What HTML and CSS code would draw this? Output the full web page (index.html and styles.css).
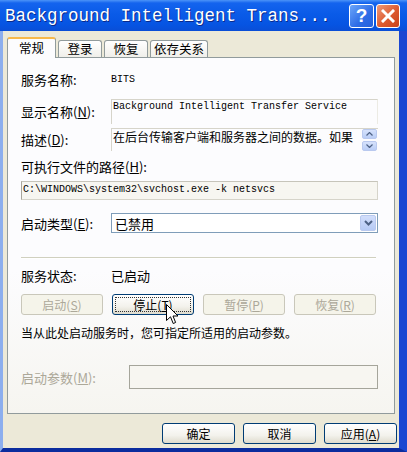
FILE: index.html
```html
<!DOCTYPE html>
<html lang="zh-CN">
<head>
    <meta charset="UTF-8">
    <meta name="viewport" content="width=device-width, initial-scale=1.0">
    <title>BITS 属性</title>
    <link rel="stylesheet" href="styles.css">
</head>
<body>
    <div class="window">
        <div class="titlebar">
            <span class="title">Background Intelligent Trans...</span>
            <span class="cap-btn help">?</span>
            <span class="cap-btn close">
                <svg width="14" height="14" viewBox="0 0 14 14"><path d="M2 2 L12 12 M12 2 L2 12" stroke="#fff" stroke-width="3" stroke-linecap="square"/></svg>
            </span>
        </div>
        <div class="client">
            <div class="tabs">
                <div class="tab active">常规</div>
                <div class="tab">登录</div>
                <div class="tab">恢复</div>
                <div class="tab wide">依存关系</div>
            </div>
            <div class="panel">
                <div class="row r-name">
                    <span class="label">服务名称:</span>
                    <span class="mono">BITS</span>
                </div>
                <div class="row r-display">
                    <span class="label">显示名称(<u>N</u>):</span>
                    <div class="textbox mono">Background Intelligent Transfer Service</div>
                </div>
                <div class="row r-desc">
                    <span class="label">描述(<u>D</u>):</span>
                    <div class="textbox desc">
                        <span>在后台传输客户端和服务器之间的数据。如果</span>
                        <div class="spin">
                            <span class="spin-btn"><svg width="7" height="4" viewBox="0 0 7 4"><path d="M0.5 3.5 L3.5 0.5 L6.5 3.5" fill="none" stroke="#4D6185" stroke-width="1.2"/></svg></span>
                            <span class="spin-btn"><svg width="7" height="4" viewBox="0 0 7 4"><path d="M0.5 0.5 L3.5 3.5 L6.5 0.5" fill="none" stroke="#4D6185" stroke-width="1.2"/></svg></span>
                        </div>
                    </div>
                </div>
                <div class="row r-path-label">
                    <span>可执行文件的路径(<u>H</u>):</span>
                </div>
                <div class="pathbox mono">C:\WINDOWS\system32\svchost.exe -k netsvcs</div>
                <div class="row r-type">
                    <span class="label">启动类型(<u>E</u>):</span>
                    <div class="combo">
                        <span>已禁用</span>
                        <span class="combo-btn"><svg width="9" height="6" viewBox="0 0 9 6"><path d="M1 1 L4.5 4.5 L8 1" fill="none" stroke="#4D6185" stroke-width="2"/></svg></span>
                    </div>
                </div>
                <div class="sep"></div>
                <div class="row r-status">
                    <span class="label">服务状态:</span>
                    <span>已启动</span>
                </div>
                <div class="btnrow">
                    <span class="btn disabled">启动(<u>S</u>)</span>
                    <span class="btn focused"><span class="focus">停止(<u>T</u>)</span></span>
                    <span class="btn disabled">暂停(<u>P</u>)</span>
                    <span class="btn disabled">恢复(<u>R</u>)</span>
                </div>
                <div class="note">当从此处启动服务时，您可指定所适用的启动参数。</div>
                <div class="row r-param">
                    <span class="label wide-label">启动参数(<u>M</u>):</span>
                    <div class="param-box"></div>
                </div>
            </div>
            <div class="footer">
                <span class="btn">确定</span>
                <span class="btn">取消</span>
                <span class="btn">应用(<u>A</u>)</span>
            </div>
        </div>
        <svg class="cursor" width="13" height="21" viewBox="0 0 13 21">
            <path d="M0.5 0.5 L0.5 16.5 L4.5 12.8 L7.2 19.5 L9.6 18.5 L7 12 L12 12 Z" fill="#fff" stroke="#000" stroke-width="1" stroke-linejoin="miter"/>
        </svg>
    </div>
</body>
</html>
```

FILE: styles.css
```css
* {
    box-sizing: border-box;
}
body {
    margin: 0;
    font-family: "Noto Sans CJK SC", sans-serif;
    font-size: 13px;
    color: #000;
}
u {
    text-decoration: underline;
}
.window {
    position: relative;
    width: 407px;
    height: 452px;
    display: flex;
    flex-direction: column;
    background: #0A3FC8;
}
.titlebar {
    height: 31px;
    flex: none;
    display: flex;
    align-items: center;
    padding-left: 5px;
    background: linear-gradient(#4C94F8 0, #1464EE 3px, #0A5BE8 45%, #0654E2 80%, #0A4ED6 100%);
}
.title {
    flex: 1;
    color: #fff;
    font-family: "Liberation Mono", monospace;
    font-size: 17.5px;
    line-height: 20px;
    white-space: nowrap;
    text-shadow: 1px 1px 0 #0B2A8A;
}
.cap-btn {
    width: 25px;
    height: 24px;
    border: 1px solid #fff;
    border-radius: 3px;
    display: flex;
    align-items: center;
    justify-content: center;
}
.help {
    margin-right: 2px;
    background: linear-gradient(135deg, #6BA6FA, #2E6CE6 60%, #2660DC);
    color: #fff;
    font-family: "Liberation Sans", sans-serif;
    font-weight: bold;
    font-size: 19px;
}
.close {
    width: 24px;
    margin-right: 7px;
    background: linear-gradient(135deg, #F09A78, #DC5A30 55%, #C8421C);
}
.client {
    flex: 1;
    display: flex;
    flex-direction: column;
    background: #ECE9D8;
    border-left: 3px solid #8CAEEE;
    border-right: 8px solid #1A47D2;
    border-bottom: 4px solid #0B2C9E;
    padding: 6px 4px 0 4px;
}
.tabs {
    display: flex;
    align-items: flex-end;
    gap: 2px;
    height: 20px;
    position: relative;
    z-index: 1;
}
.tab {
    width: 44px;
    height: 17px;
    border: 1px solid #919B9C;
    border-bottom: none;
    border-radius: 3px 3px 0 0;
    background: linear-gradient(#FFFFFF, #F0EFEA);
    font-size: 12.5px;
    line-height: 16px;
    text-align: center;
}
.tab.wide {
    width: 58px;
}
.tab.active {
    width: 49px;
    height: 21px;
    margin-bottom: -1px;
    border-top: 2px solid #F7B94B;
    background: #FCFCFE;
    line-height: 17px;
}
.panel {
    height: 357px;
    flex: none;
    border: 1px solid #919B9C;
    background: linear-gradient(#FCFCFE 60%, #F6F5F0);
    padding: 12px 16px 0 13px;
    display: flex;
    flex-direction: column;
}
.row {
    display: flex;
    align-items: center;
    flex: none;
}
.label {
    width: 90px;
    flex: none;
    white-space: nowrap;
}
.wide-label {
    width: 108px;
}
.mono {
    font-family: "Liberation Mono", monospace;
    font-size: 10px;
}
.r-name {
    height: 18px;
}
.r-display {
    margin-top: 11px;
    height: 25px;
}
.textbox {
    flex: 1;
    align-self: stretch;
    border-top: 1px solid #D6D4CA;
    border-left: 1px solid #D6D4CA;
    border-right: 1px solid #ECEBE4;
    padding: 0 1px;
    line-height: 13px;
}
.r-desc {
    margin-top: 4px;
    height: 23px;
}
.desc {
    display: flex;
    justify-content: space-between;
    font-size: 12px;
    line-height: 16px;
    border-right: none;
}
.spin {
    display: flex;
    flex-direction: column;
    gap: 2px;
    padding-top: 0;
}
.spin-btn {
    width: 15px;
    height: 10px;
    border: 1px solid #B9C9EF;
    border-radius: 2px;
    background: linear-gradient(#D6E2FC, #B9CDF6);
    display: flex;
    align-items: center;
    justify-content: center;
}
.r-path-label {
    margin-top: 7px;
    height: 16px;
}
.pathbox {
    margin-top: 7px;
    height: 19px;
    width: 357px;
    flex: none;
    border: 1px solid #D6D4CA;
    border-left-color: #A8A69C;
    border-top-color: #C6C4BA;
    background: #F7F6F1;
    line-height: 16px;
    padding-left: 1px;
}
.r-type {
    margin-top: 13px;
    height: 20px;
}
.combo {
    flex: 1;
    align-self: stretch;
    border: 1px solid #7F9DB9;
    background: #fff;
    display: flex;
    align-items: center;
    justify-content: space-between;
    padding: 0 1px 0 3px;
}
.combo-btn {
    width: 16px;
    height: 16px;
    border: 1px solid #B9C9EF;
    border-radius: 2px;
    background: linear-gradient(#D2DEFB, #B6CAF5);
    display: flex;
    align-items: center;
    justify-content: center;
}
.sep {
    margin-top: 24px;
    width: 355px;
    height: 2px;
    flex: none;
    border-top: 1px solid #D0D0BF;
    border-bottom: 1px solid #fff;
}
.r-status {
    margin-top: 7px;
    height: 18px;
}
.btnrow {
    margin-top: 10px;
    display: flex;
    gap: 9px;
    flex: none;
}
.btn {
    width: 82px;
    height: 21px;
    border: 1px solid #003C74;
    border-radius: 3px;
    background: linear-gradient(#FFFFFF, #F3F2EC 60%, #DEDBCD);
    font-size: 12px;
    display: flex;
    align-items: center;
    justify-content: center;
}
.btn.disabled {
    border-color: #C9C7BA;
    background: #F5F4EA;
    color: #ACA899;
}
.btn.focused {
    padding: 2px;
}
.focus {
    flex: 1;
    align-self: stretch;
    border: 1px dotted #333;
    display: flex;
    align-items: center;
    justify-content: center;
}
.note {
    margin-top: 10px;
    height: 16px;
    font-size: 12px;
    line-height: 16px;
    flex: none;
}
.r-param {
    margin-top: 24px;
    height: 24px;
    color: #ACA899;
}
.param-box {
    flex: 1;
    align-self: stretch;
    border: 1px solid #A5A59B;
    background: #F7F6F1;
}
.footer {
    margin-top: 9px;
    display: flex;
    justify-content: flex-end;
    gap: 8px;
    padding-right: 0;
    margin-right: -2px;
}
.footer .btn {
    width: 73px;
}
.cursor {
    position: absolute;
    left: 166px;
    top: 304px;
}
```
